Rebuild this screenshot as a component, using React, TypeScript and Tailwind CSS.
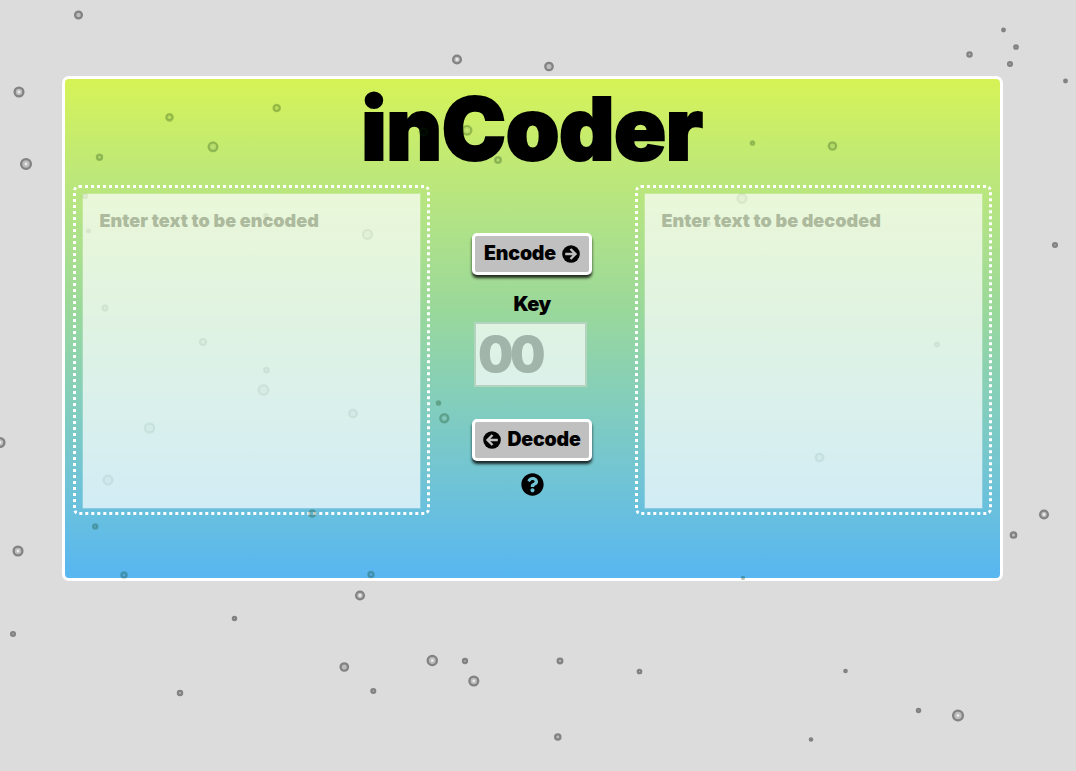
import React from "react";
import { FaQuestionCircle } from "react-icons/fa";

type Dot = [number, number, number];

const outerDots: Dot[] = [
  [78.5, 15, 4.5], [19, 92, 5.5], [26, 164, 6], [457, 59.5, 5], [549, 66.5, 4.8],
  [969.5, 54.5, 3.2], [1003.5, 30, 2.4], [1016, 47, 2.8], [1010, 64, 3], [1065.5, 81, 2.4],
  [1055, 245, 3], [0, 442.5, 5.5], [18, 551, 5.5], [13, 634, 3], [1044, 514.5, 5],
  [1013.5, 535, 3.8], [360, 595.5, 5], [234.5, 618.5, 2.7], [180, 693, 3.2], [344.3, 667, 4.8],
  [373.3, 691, 3], [432.3, 660.5, 5.7], [465, 661, 3.1], [473.8, 681, 5.5], [560, 661, 3.4],
  [557.8, 737, 3.7], [639.5, 671.5, 2.8], [845.5, 671, 2.3], [918.5, 710.5, 2.7],
  [958, 715.5, 6], [811, 739.5, 2.3],
];

const innerDots: Dot[] = [
  [169.5, 117.3, 4.3], [276.7, 108, 4.3], [213, 146.8, 5.5], [99.5, 157.2, 3.7],
  [423.5, 132, 4.8], [467, 130.3, 5.5], [498, 160, 4], [752.5, 143, 2.8], [832.5, 146, 4.8],
  [438.5, 403, 2.8], [444.3, 418.2, 5.2], [312.3, 513.5, 4.2],
  [95.2, 526.6, 3.2], [124, 575, 3.7], [371, 574.5, 3.7], [743, 578, 2.2],
];

const veiledDots: Dot[] = [
  [85, 196, 3.2], [88.5, 230.8, 2.6], [266, 216, 3], [367.5, 234.5, 5.7], [105, 308, 3.6],
  [203, 342, 4.3], [266.5, 370, 3.5], [263.5, 390, 6], [353, 413.5, 5], [149.5, 428, 5.8],
  [108, 480, 5.6], [742, 198.5, 5.5], [708, 223.5, 3], [937, 344.5, 3], [819.5, 457.5, 5],
];

function Dots({ dots, ring, core, glow }: { dots: Dot[]; ring: string; core: string; glow: number }) {
  return (
    <>
      {dots.map(([x, y, r]) => (
        <g key={`${x}-${y}`}>
          <circle cx={x} cy={y} r={r - 1} fill={core} />
          <circle cx={x} cy={y} r={r - 1.1} fill="none" stroke={ring} strokeWidth={2.3} />
          {r > 4.9 && <circle cx={x} cy={y} r={1.4} fill="white" fillOpacity={glow} />}
        </g>
      ))}
    </>
  );
}

function Arrow({ left }: { left?: boolean }) {
  return (
    <svg viewBox="0 0 18 18" className={left ? "size-[18px] shrink-0 rotate-180" : "size-[18px] shrink-0"}>
      <circle cx="9" cy="9" r="8.8" />
      <path d="M3.2 9h10M8.5 4 13.5 9l-5 5" fill="none" stroke="#c0c0c0" strokeWidth="2.4" />
    </svg>
  );
}

function Panel({ placeholder }: { placeholder: string }) {
  return (
    <div className="h-[330px] w-[357px] shrink-0 rounded-[6px] border-[3px] border-dotted border-white pt-[5px] pl-[6px]">
      <textarea
        placeholder={placeholder}
        className="block h-[316px] w-[339px] resize-none border border-white/20 bg-white/70 bg-clip-padding pt-[13px] pr-3 pl-[17px] text-[18px] leading-[27px] font-black tracking-[0.04px] text-black outline-none placeholder:text-[#adba9d]"
      />
    </div>
  );
}

const buttonClass =
  "flex h-[42px] w-[120px] items-center justify-center gap-[6px] rounded-[5px] border-[3px] border-white bg-[#c0c0c0] text-[19.5px] leading-none font-black tracking-[-0.2px] text-black shadow-[0_3px_3px_#000000cc]";

export default function App() {
  return (
    <div className="relative h-[771px] w-[1076px] overflow-hidden bg-[#dcdcdc] pt-[76px] pl-[61.5px] font-['Inter',sans-serif]">
      <main className="h-[505px] w-[941px] rounded-[7px] border-[3px] border-white bg-linear-to-b from-[#d6f355] via-[#9ad89a] via-[46%] to-[#58b6f1] px-2">
        <h1 className="flex h-[106px] items-center justify-center pb-[7px] text-[86px] leading-none font-black tracking-[-0.4px] [-webkit-text-stroke:2px_black]">
          inCoder
        </h1>
        <div className="flex justify-between">
          <Panel placeholder="Enter text to be encoded" />
          <div className="flex w-[120px] flex-col items-center pt-[48px]">
            <button className={buttonClass}>Encode <Arrow /></button>
            <label htmlFor="key" className="mt-[16px] text-[20px] leading-[26px] font-black tracking-[-0.7px]">Key</label>
            <input
              id="key"
              placeholder="00"
              className="mt-[5px] mr-[3px] h-[65px] w-[113px] border-2 border-[#b4d4bf] bg-white/70 bg-clip-padding px-[2px] text-[50px] font-black tracking-[-3.5px] outline-none placeholder:text-[#a1b5aa]"
            />
            <button className={`${buttonClass} mt-[32px]`}><Arrow left /> Decode</button>
            <FaQuestionCircle className="mt-[12px] size-[23px]" />
          </div>
          <Panel placeholder="Enter text to be decoded" />
        </div>
      </main>
      <svg className="pointer-events-none absolute inset-0" width="1076" height="771">
        <Dots dots={outerDots} ring="#828282" core="#bcbcbc" glow={0.7} />
        <Dots dots={innerDots} ring="#0030003c" core="#00300018" glow={0.2} />
        <Dots dots={veiledDots} ring="#0030000f" core="#00300006" glow={0} />
      </svg>
    </div>
  );
}
